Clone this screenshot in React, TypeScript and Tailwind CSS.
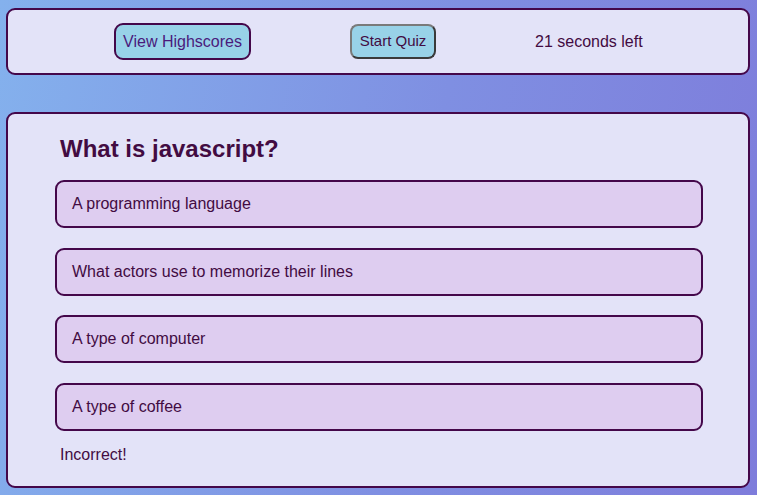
import React from "react";

export default function App() {
  const answers = [
    "A programming language",
    "What actors use to memorize their lines",
    "A type of computer",
    "A type of coffee",
  ];
  return (
    <div
      className="w-[757px] h-[495px] overflow-hidden bg-[linear-gradient(100deg,#84b1ed_0%,#7f8fe2_55%,#7e7cdb_100%)] pt-[8px] px-[6px] text-[#420b42]"
      style={{ fontFamily: '"Liberation Sans", Arial, Helvetica, sans-serif' }}
    >
      <header className="h-[67px] w-[744px] rounded-[9px] border-2 border-[#44074a] bg-[#e3e3f8] flex items-center pl-[106px] gap-[99px]">
        <button className="h-[37px] w-[137px] shrink-0 rounded-[9px] border-2 border-[#44074a] bg-[#98d2e8] text-[16px] text-[#4a1a7c] flex items-center justify-center">
          View Highscores
        </button>
        <button className="h-[35px] w-[86px] shrink-0 rounded-[8px] border-2 border-t-[#7a7a7a] border-l-[#7a7a7a] border-b-[#3a3a3a] border-r-[#3a3a3a] bg-[#98d2e8] text-[15px] text-[#420b42] flex items-center justify-center">
          Start Quiz
        </button>
        <span className="text-[16px] text-[#420b42] whitespace-nowrap">21 seconds left</span>
      </header>
      <main className="mt-[37px] w-[744px] h-[376px] rounded-[9px] border-2 border-[#44074a] bg-[#e3e3f8] pl-[47px] pr-[45px] pt-[21px]">
        <h2 className="text-[24px] font-bold leading-[27px] pl-[5px] text-[#420b42]">What is javascript?</h2>
        <div className="mt-[18px] flex flex-col gap-[19.5px]">
          {answers.map((a) => (
            <div
              key={a}
              className="h-[48px] rounded-[9px] border-2 border-[#44074a] bg-[#decdf0] flex items-center pl-[15px] text-[16px] text-[#420b42]"
            >
              {a}
            </div>
          ))}
        </div>
        <p className="mt-[15px] pl-[5px] text-[16px] leading-[18px] text-[#420b42]">Incorrect!</p>
      </main>
    </div>
  );
}
